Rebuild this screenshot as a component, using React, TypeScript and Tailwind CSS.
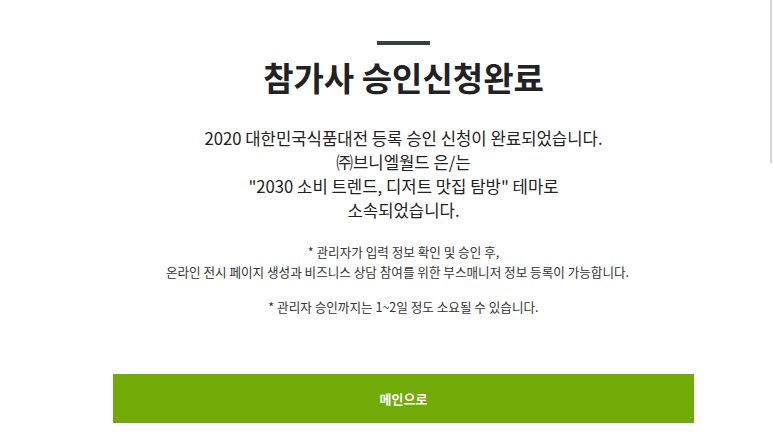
import React from "react";

export default function App() {
  return (
    <div
      className="relative w-[773px] h-[436px] bg-white overflow-hidden text-[#222]"
      style={{ fontFamily: '"Noto Sans CJK KR", "Noto Sans", sans-serif' }}
    >
      <div className="absolute right-[1px] top-0 w-[2px] h-[163px] bg-[#d6d6d6]" />
      <div className="flex flex-col items-center pt-[41px] pl-[34px]">
        <div className="w-[53px] h-[4px] bg-[#3a3f41]" />
        <h1 className="mt-[10px] text-[33px] leading-[44px] font-bold text-[#222]">
          참가사 승인신청완료
        </h1>
        <div className="mt-[27px] text-center text-[16.7px] leading-[24px] text-[#222]">
          <p>2020 대한민국식품대전 등록 승인 신청이 완료되었습니다.</p>
          <p>㈜브니엘월드 은/는</p>
          <p>"2030 소비 트렌드, 디저트 맛집 탐방" 테마로</p>
          <p>소속되었습니다.</p>
        </div>
        <div className="mt-[20px] flex flex-col items-center text-center text-[12.6px] leading-[20px] text-[#333]">
          <p>* 관리자가 입력 정보 확인 및 승인 후,</p>
          <p className="pr-[12px]">온라인 전시 페이지 생성과 비즈니스 상담 참여를 위한 부스매니저 정보 등록이 가능합니다.</p>
          <p className="mt-[15px]">* 관리자 승인까지는 1~2일 정도 소요될 수 있습니다.</p>
        </div>
        <button className="mt-[57px] w-[581px] h-[49px] bg-[#72aa08] text-white text-[13px] font-bold flex items-center justify-center">
          메인으로
        </button>
      </div>
    </div>
  );
}
